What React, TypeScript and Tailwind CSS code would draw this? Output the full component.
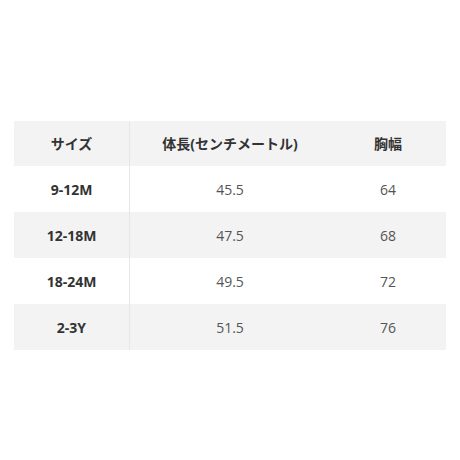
const rows = [
  { size: "9-12M", length: "45.5", chest: "64" },
  { size: "12-18M", length: "47.5", chest: "68" },
  { size: "18-24M", length: "49.5", chest: "72" },
  { size: "2-3Y", length: "51.5", chest: "76" },
];

export default function App() {
  return (
    <div
      className="w-[460px] h-[460px] bg-white pt-[121px] pl-[14px]"
      style={{ fontFamily: '"Open Sans", "Noto Sans CJK JP", sans-serif' }}
    >
      <div className="w-[432px] text-[14px]">
        {/* Header */}
        <div className="grid grid-cols-[116px_200px_116px] h-[45px] bg-[#f3f3f3] font-bold text-[#333333]">
          <div className="flex items-center justify-center border-r border-[#e6e6e6]">サイズ</div>
          <div className="flex items-center justify-center">体長(センチメートル)</div>
          <div className="flex items-center justify-center">胸幅</div>
        </div>
        {rows.map((row, i) => (
          <div
            key={row.size}
            className={`grid grid-cols-[116px_200px_116px] h-[46px] ${i % 2 === 1 ? "bg-[#f3f3f3]" : "bg-white"}`}
          >
            <div className="flex items-center justify-center border-r border-[#e6e6e6] font-bold text-[#333333]">
              {row.size}
            </div>
            <div className="flex items-center justify-center text-[#555555]">{row.length}</div>
            <div className="flex items-center justify-center text-[#555555]">{row.chest}</div>
          </div>
        ))}
      </div>
    </div>
  );
}
